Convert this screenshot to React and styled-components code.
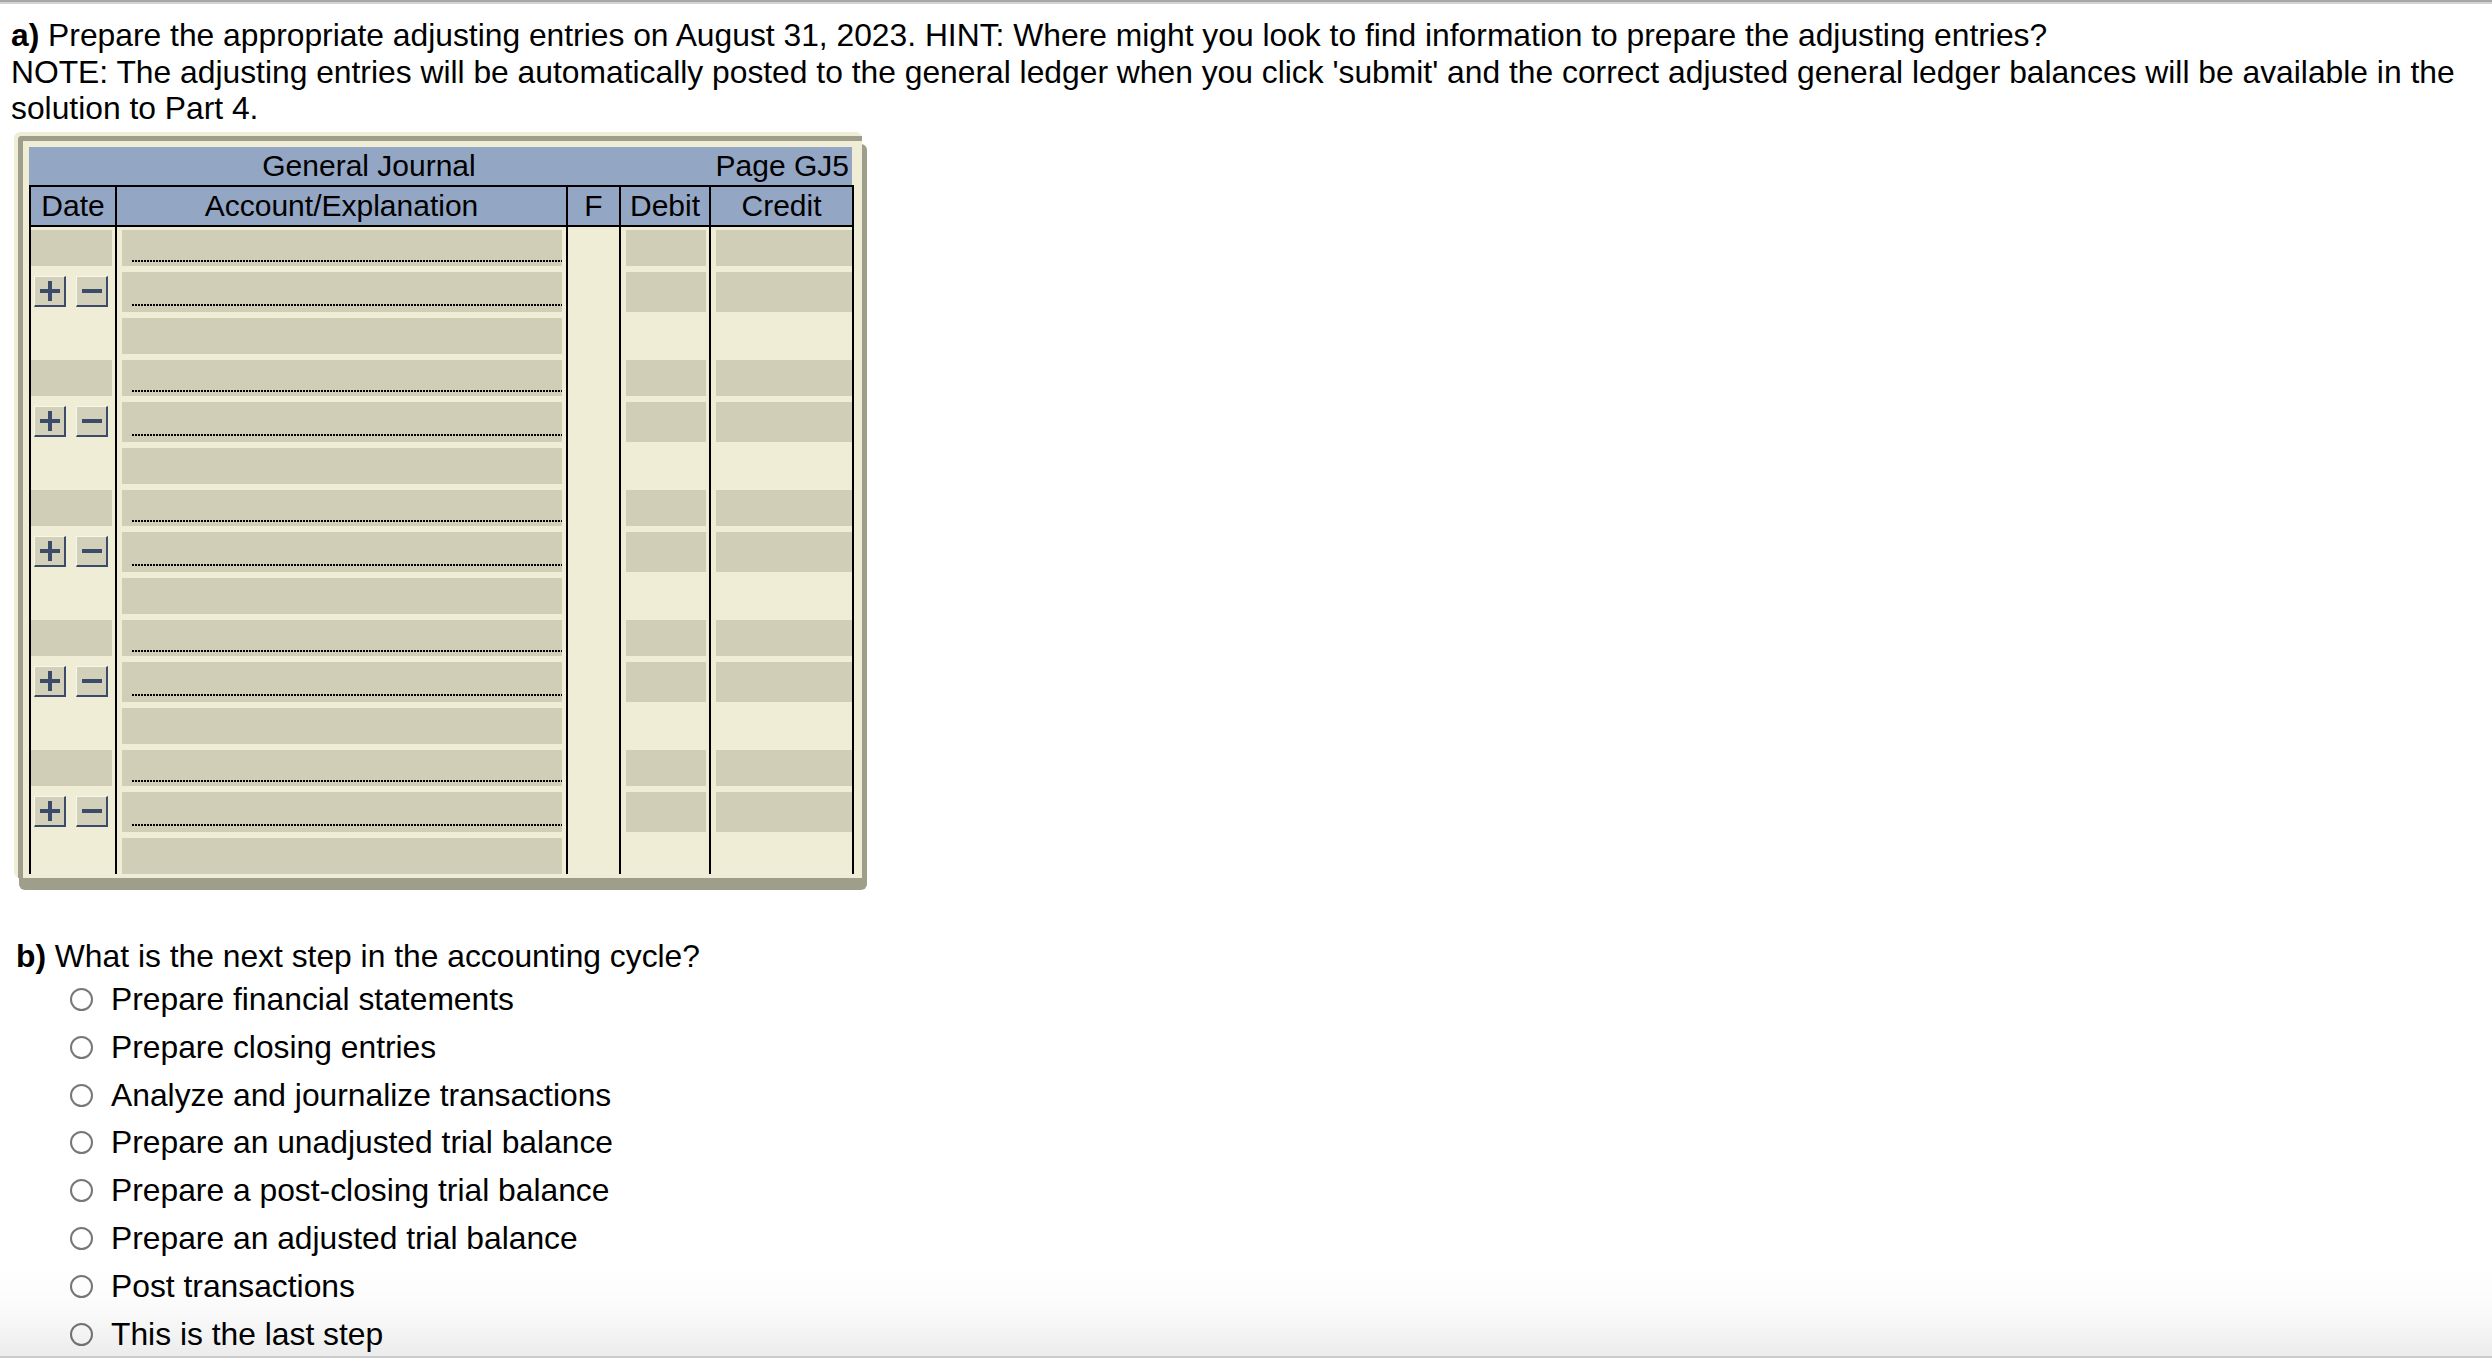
import React from 'react';
import styled, { createGlobalStyle } from 'styled-components';

const Global = createGlobalStyle`
  html, body { margin: 0; padding: 0; background: #ffffff; }
  body { font-family: "Liberation Sans", Arial, Helvetica, sans-serif; color: #000; }
  * { box-sizing: border-box; }
`;

const BEIGE = '#efedd6';
const TAN = '#d0ceb6';
const GRAY = '#9f9e8a';
const BLUE = '#93a6c4';
const COLS = '86px 451px 53px 90px 145px';

const Page = styled.div`
  position: relative;
  min-height: 1358px;
  overflow: hidden;
`;

const TopRule = styled.div`
  height: 2px;
  background: #a7a7a7;
  border-bottom: 2px solid #d3d3d3;
  box-sizing: content-box;
`;

const Prompt = styled.div`
  padding: 13px 11px 0 11px;
  font-size: 31.8px;
  line-height: 36.6px;
  white-space: nowrap;
`;

const Bold = styled.b`
  font-weight: 700;
`;

const PanelOuter = styled.div`
  margin: 5px 0 0 14px;
  width: 848px;
  padding: 4px 0 0 4px;
  background: ${BEIGE};
  border-radius: 6px;
  box-shadow: 5px 12px 0 0 ${GRAY};
`;

const PanelInner = styled.div`
  border-top: 5px solid ${GRAY};
  border-left: 5px solid ${GRAY};
  border-top-left-radius: 4px;
  padding: 6px 8px 4px 6px;
  background: ${BEIGE};
`;

const TitleRow = styled.div`
  display: grid;
  grid-template-columns: 680px 143px;
  height: 38px;
  background: ${BLUE};
  font-size: 30px;
  align-items: center;
  border-bottom: 2px solid #000;
  box-sizing: content-box;
  width: 823px;
  margin-right: 2px;
`;

const Title = styled.div`
  text-align: center;
`;

const PageNo = styled.div`
  text-align: right;
  padding-right: 3px;
`;

const HeadRow = styled.div`
  display: grid;
  grid-template-columns: ${COLS};
  height: 42px;
  background: ${BLUE};
  font-size: 30px;
  border-top: 2px solid #000;
  border-bottom: 2px solid #000;
  margin-top: -2px;
`;

const HeadCell = styled.div`
  border-left: 2px solid #000;
  ${p => (p.$last ? 'border-right: 2px solid #000;' : '')}
  display: flex;
  align-items: center;
  justify-content: center;
`;

const BodyRow = styled.div`
  display: grid;
  grid-template-columns: ${COLS};
`;

const Col = styled.div`
  border-left: 2px solid #000;
  ${p => (p.$last ? 'border-right: 2px solid #000;' : '')}
  padding-top: ${p => (p.$first ? 3 : 6)}px;
  display: flex;
  min-height: ${p => p.$h + (p.$first ? 3 : 6)}px;
`;

const Box = styled.div`
  background: ${TAN};
  height: ${p => p.$h}px;
  flex: 1;
  margin-left: ${p => p.$ml || 0}px;
  margin-right: ${p => p.$mr || 0}px;
`;

const AccountBox = styled(Box)`
  display: flex;
  flex-direction: column;
  justify-content: flex-end;
  padding: 0 0 ${p => p.$dotOffset}px 10px;
`;

const Dots = styled.div`
  height: 2px;
  background-image: repeating-linear-gradient(
    to right,
    #000 0px,
    #000 2px,
    transparent 2px,
    transparent 3px
  );
`;

const ButtonGroup = styled.div`
  display: flex;
  gap: 10px;
  padding: 4px 0 0 3px;
`;

const MiniButton = styled.button`
  width: 32px;
  height: 31px;
  padding: 0;
  margin: 0;
  background: #d2d0b9;
  border-style: solid;
  border-width: 1px 2px 2px 1px;
  border-color: #f7f6ec #3d4b6b #3d4b6b #f7f6ec;
  display: flex;
  align-items: center;
  justify-content: center;
  cursor: pointer;
`;

const QuestionB = styled.div`
  margin-top: 60px;
  padding-left: 16px;
  font-size: 31.8px;
  line-height: 36.6px;
`;

const Options = styled.div`
  padding-left: 70px;
  margin-top: 1px;
`;

const Option = styled.label`
  display: flex;
  align-items: center;
  height: 47.9px;
  font-size: 31.8px;
  cursor: pointer;
`;

const Radio = styled.span`
  width: 23px;
  height: 23px;
  border-radius: 50%;
  border: 2px solid #777777;
  background: #fff;
  margin-right: 18px;
  flex: none;
`;

const BottomShade = styled.div`
  position: fixed;
  left: 0;
  right: 0;
  bottom: 0;
  height: 90px;
  background: linear-gradient(to bottom, rgba(0, 0, 0, 0) 0%, rgba(0, 0, 0, 0.02) 50%, rgba(0, 0, 0, 0.075) 100%);
  border-bottom: 2px solid #cbcbcb;
  pointer-events: none;
`;

const Plus = () => (
  <svg width="20" height="20" viewBox="0 0 20 20">
    <rect x="8" y="0" width="4" height="20" fill="#3d4b6b" />
    <rect x="0" y="8" width="20" height="4" fill="#3d4b6b" />
  </svg>
);

const Minus = () => (
  <svg width="20" height="20" viewBox="0 0 20 20">
    <rect x="0" y="8" width="20" height="4" fill="#3d4b6b" />
  </svg>
);

const kinds = [];
for (let g = 0; g < 5; g++) {
  kinds.push({ kind: 'line', h: 36, dot: 4 });
  kinds.push({ kind: 'buttons', h: 40, dot: 6 });
  kinds.push({ kind: 'expl', h: 36 });
}

const options = [
  'Prepare financial statements',
  'Prepare closing entries',
  'Analyze and journalize transactions',
  'Prepare an unadjusted trial balance',
  'Prepare a post-closing trial balance',
  'Prepare an adjusted trial balance',
  'Post transactions',
  'This is the last step',
];

function JournalRow({ row, first }) {
  const { kind, h, dot } = row;
  const amounts = kind !== 'expl';
  return (
    <BodyRow>
      <Col $first={first} $h={h}>
        {kind === 'line' && <Box $h={h} $mr={3} />}
        {kind === 'buttons' && (
          <ButtonGroup>
            <MiniButton aria-label="add"><Plus /></MiniButton>
            <MiniButton aria-label="remove"><Minus /></MiniButton>
          </ButtonGroup>
        )}
      </Col>
      <Col $first={first} $h={h}>
        {kind === 'expl' ? (
          <Box $h={h} $ml={5} $mr={4} />
        ) : (
          <AccountBox $h={h} $ml={5} $mr={4} $dotOffset={dot}>
            <Dots />
          </AccountBox>
        )}
      </Col>
      <Col $first={first} $h={h} />
      <Col $first={first} $h={h}>
        {amounts && <Box $h={h} $ml={5} $mr={3} />}
      </Col>
      <Col $first={first} $h={h} $last>
        {amounts && <Box $h={h} $ml={5} />}
      </Col>
    </BodyRow>
  );
}

export default function App() {
  return (
    <Page>
      <Global />
      <TopRule />
      <Prompt>
        <Bold>a)</Bold> Prepare the appropriate adjusting entries on August 31, 2023. HINT: Where might you look to find information to prepare the adjusting entries?
        <br />
        NOTE: The adjusting entries will be automatically posted to the general ledger when you click 'submit' and the correct adjusted general ledger balances will be available in the
        <br />
        solution to Part 4.
      </Prompt>

      <PanelOuter>
        <PanelInner>
          <TitleRow>
            <Title>General Journal</Title>
            <PageNo>Page GJ5</PageNo>
          </TitleRow>
          <HeadRow>
            <HeadCell>Date</HeadCell>
            <HeadCell>Account/Explanation</HeadCell>
            <HeadCell>F</HeadCell>
            <HeadCell>Debit</HeadCell>
            <HeadCell $last>Credit</HeadCell>
          </HeadRow>
          {kinds.map((row, i) => (
            <JournalRow key={i} row={row} first={i === 0} />
          ))}
        </PanelInner>
      </PanelOuter>

      <QuestionB>
        <Bold>b)</Bold> What is the next step in the accounting cycle?
      </QuestionB>
      <Options>
        {options.map(o => (
          <Option key={o}>
            <Radio />
            {o}
          </Option>
        ))}
      </Options>
      <BottomShade />
    </Page>
  );
}
